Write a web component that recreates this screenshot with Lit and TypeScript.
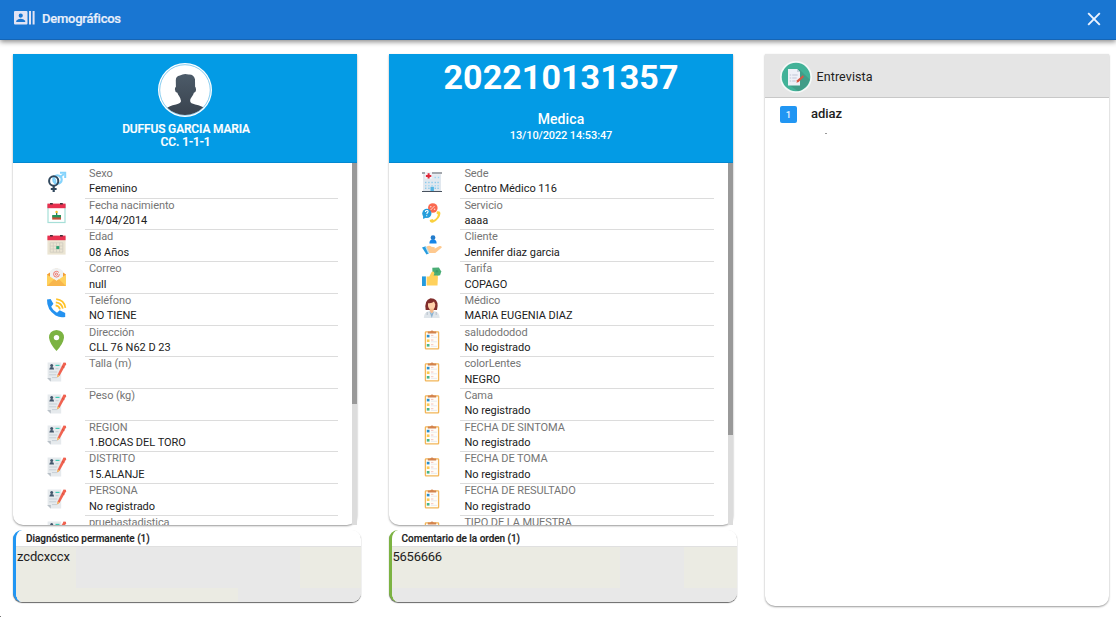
import { LitElement, html, css, svg } from "lit";
import { customElement, property } from "lit/decorators.js";
import { styleMap } from "lit/directives/style-map.js";

const dot = (x: number, y: number, c: string, w = 1.4) => svg`<rect x=${x} y=${y} width=${w} height=${w} fill=${c}/>`;

const icons: Record<string, unknown> = {
  gender: svg`<g fill="none"><circle cx="10.5" cy="7.5" r="4.2" stroke="#84d3fc" stroke-width="2.2"/><path d="M12.5 5.5 17 2" stroke="#84d3fc" stroke-width="2"/><path d="M13 .8h5.2V6" stroke="#84d3fc" stroke-width="2"/><ellipse cx="6.7" cy="9" rx="4.6" ry="4.8" stroke="#32495e" stroke-width="2"/><path d="M6.7 13.8V20M3.8 17h5.8" stroke="#32495e" stroke-width="2.2"/><path d="M6.5 5.6q3.4 2.8 1.2 6.4" stroke="#84d3fc" stroke-width="1.6"/></g>`,
  cake: svg`<rect x="1" y="2" width="17" height="17.5" fill="#fff" stroke="#a6dfd8" stroke-width="1.2"/><path d="M.4.6h18.2v4.6H.4z" fill="#e8304f"/><path d="M3 0h2.8v1.6H3zM13 0h2.8v1.6H13z" fill="#46303a"/><path d="M5.2 13.4h8.8v3.2H5.2z" fill="#c4503a"/><path d="M5.2 12h8.8v2.4H5.2z" fill="#24945a"/><path d="M9 9.6h1.3V12H9z" fill="#2f7d57"/><circle cx="9.6" cy="8.9" r="1.2" fill="#f5bf27"/>`,
  calendar: svg`<path d="M.4 2h18.2v17.6H.4z" fill="#ebe5d3"/><path d="M.4.6h18.2v4.6H.4z" fill="#e8304f"/><path d="M3 0h2.8v1.6H3zM13 0h2.8v1.6H13z" fill="#46303a"/><path d="M3.2 7.8h12.6v9.4H3.2zM3.2 11h12.6M3.2 14h12.6M6.3 7.8v9.4M9.5 7.8v9.4M12.6 7.8v9.4" fill="none" stroke="#cfcbc0" stroke-width=".8"/><path d="M9.3 11.1h3v3h-3z" fill="#28a071"/>`,
  mail: svg`<path d="M0 7.5 9.5 1 19 7.5V10H0z" fill="#f29d38"/><path d="M3 4q6.5-6 13 0v9H3z" fill="#f0f1f1"/><circle cx="9.5" cy="7.2" r="2.9" fill="none" stroke="#ed5b51" stroke-width=".8" stroke-dasharray="16 2"/><circle cx="9.5" cy="7.2" r="1.1" fill="none" stroke="#ed5b51" stroke-width=".8"/><path d="M0 7.5 9.5 14 19 7.5V19H0z" fill="#ffd15c"/><path d="m0 19 7-6.7 2.5 1.5 2.5-1.5L19 19z" fill="#f8b64c"/>`,
  phone: svg`<path d="M0 1.5 3.6 1l2.8 4.7-2.2 3q1.8 4 5.8 6l2.7-2.4 5.5 2.6v4q-5 1.3-9.6-1.4Q-.4 11.5 0 1.5Z" fill="#2492f0"/><g fill="none" stroke="#ffc226" stroke-width="1.7"><path d="M9.2 1.2q8 .8 9.2 8.7M8.8 4.3q6 .6 7 6.4M8.6 7.4q3.6.6 4.4 4"/></g>`,
  pin: svg`<path d="M9.5 0Q17 .6 17 7.8 16.2 14 9.5 21 2.8 14 2 7.8 2 .6 9.5 0Z" fill="#7cb342"/><circle cx="9.5" cy="7.6" r="2.7" fill="#fff"/>`,
  form: svg`<path d="M.6.5h13.6v19H3.2L.6 16.8z" fill="#e6eaed"/><path d="M.2 16h3.6v3.5z" fill="#b8c0c7"/><circle cx="4.7" cy="3.4" r="1.5" fill="#41566b"/><path d="M2.3 7.4q.1-2.3 2.4-2.3t2.4 2.3z" fill="#41566b"/><path d="M8.5 3.4h4" stroke="#3fc9b5" stroke-width="1.2"/><path d="M8.5 6.7h3M2.2 10h8M2.2 12.8h7M5 15.6h5" stroke="#c6cfd5" stroke-width="1"/><path d="m10.2 15.5.5-3L16.5.6l2.4.2.2 1.5-6.4 11.2z" fill="#f06250"/><path d="m10.2 15.5.5-3 2 1z" fill="#efc75e"/><path d="m14.8 4.2 2.6 1.4" stroke="#d44c3c" stroke-width=".8"/>`,
  hospital: svg`<path d="M0 1h20M0 19.5h20" stroke="#48515d" stroke-width="1.1"/><path d="M1 2.2h18V19H1z" fill="#e1e8ef"/><path d="M3 0h7v6.8H3z" fill="#f1f3f7"/><path d="M5.6 1.2h2v1.7h1.7v2H7.6v1.7h-2V4.9H3.9v-2h1.7z" fill="#e02a3b"/>${[4, 7.2, 10.4, 13.6, 16.4].map((x) => svg`${dot(x - 1, 9.8, "#8ccbec")}${dot(x - 1, 13, "#a3d8f3")}${dot(x - 1, 15.6, "#8ccbec")}`)}${dot(12.5, 4.8, "#9ad4f2")}${dot(15.8, 4.8, "#9ad4f2")}<path d="M8.5 14.8h3.4V19H8.5z" fill="#55b4e2"/>`,
  service: svg`<circle cx="10.8" cy="5" r="4.8" fill="#fa694f"/><path d="m8.6 7 4-4" stroke="#fff" stroke-width=".7"/><circle cx="8.8" cy="3.7" r=".8" fill="#ffd9d2"/><circle cx="12.6" cy="6.3" r=".8" fill="#ffd9d2"/><circle cx="4.8" cy="10.4" r="4.6" fill="#259ddb"/><path d="m1 13 .2 3 3-1.5z" fill="#259ddb"/><path d="M3.4 9q.2-1.8 1.8-1.5 1.8.6 0 2.4l-.4 1.2M4.7 12.2v1" fill="none" stroke="#fff" stroke-width="1.1"/><path d="M15.2 8.2q3.4-.4 3.2 2.4-.2 5.4-7.2 9-3.4.6-3.5-2.5l2.8-1 1.2.9q3.6-1.9 4.2-5.5l-1.5-1.3z" fill="#fad03e"/>`,
  client: svg`<circle cx="11" cy="2.7" r="2.4" fill="#247ccb"/><path d="M7.4 8.6q-.2-4.2 3.6-4.2t3.6 4.2z" fill="#1686e9"/><path d="M4 12.2q3.2-2.7 5.4-.4l3.2.4q.9 1.2-.5 1.9L17.5 11q2-.4 2.3 1.4L13.3 18H5z" fill="#fec98f"/><path d="m0 12.4 3.8-1.1 3.3 7-2.6 1.3z" fill="#259bde"/><path d="m3 11.6 1.3-.4 3.2 6.8-1.3.5z" fill="#bfe5f5"/>`,
  pay: svg`<path d="m10.3.7 6.6-.3 2.4 4-1.2 3.8-7.4 1.6z" fill="#4aad75"/><circle cx="14.8" cy="4.2" r="1.3" fill="#3b9c6a"/><path d="M4.6 9.4h2.7L9.6 5q2.6-1.2 2.8 1.4l-.8 2h3.3q1.4.5 1 2l-.4 8.2H4.6z" fill="#ffd15c"/><path d="M0 9.4h3.9V19H0z" fill="#259bde"/>`,
  doctor: svg`<path d="M3.7 12Q2 2 8.5.2 16 .4 15.6 8l-.6 4z" fill="#812d2b"/><path d="M6 5.2q4 .5 6-1.7l1.3 3q-.4 5-3.6 5.7Q6.6 11.5 6 8z" fill="#ffd0aa"/><path d="M7.7 10.6h4V15h-4z" fill="#f3ba8e"/><path d="M1.8 20q0-6 5.9-7L9.8 16l2.1-3q5.8 1 5.8 7z" fill="#dfe5ea"/><path d="M7.4 13.4 9.8 20l2.3-6.6-2.3 2.2z" fill="#8db4d2"/><path d="M5.2 14v3M14.2 14v3" stroke="#a9b6c2" stroke-width=".8"/>`,
  clipboard: svg`<rect x="3.4" y="1.9" width="13.2" height="17" rx=".6" fill="#fffdf8" stroke="#f2b558" stroke-width="1.3"/><path d="M5.8 3.4V1.6h2.4Q10-.6 11.8 1.6h2.4v1.8z" fill="#d3834e"/><path d="M4.8 4.8h2.7v2.6H4.8z" fill="#288fcc"/><path d="M4.8 9.4h2.7V12H4.8z" fill="#fbc950"/><path d="M4.8 14h2.7v2.6H4.8z" fill="#46b58a"/><path d="M9 5.4h2.4M9 10h2.4M9 14.7h2.4" stroke="#f5bdb6" stroke-width=".9"/><path d="M9 7.2h6M9 11.8h6M9 16.4h6" stroke="#e6e9ec" stroke-width=".9"/>`,
};

interface Row { icon: string; label: string; value: string }
const row = (icon: string, label: string, value: string): Row => ({ icon, label, value });

const patient: Row[] = [
  row("gender", "Sexo", "Femenino"),
  row("cake", "Fecha nacimiento", "14/04/2014"),
  row("calendar", "Edad", "08 Años"),
  row("mail", "Correo", "null"),
  row("phone", "Teléfono", "NO TIENE"),
  row("pin", "Dirección", "CLL 76 N62 D 23"),
  row("form", "Talla (m)", ""),
  row("form", "Peso (kg)", ""),
  row("form", "REGION", "1.BOCAS DEL TORO"),
  row("form", "DISTRITO", "15.ALANJE"),
  row("form", "PERSONA", "No registrado"),
  row("form", "pruebastadistica", ""),
];
const order: Row[] = [
  row("hospital", "Sede", "Centro Médico 116"),
  row("service", "Servicio", "aaaa"),
  row("client", "Cliente", "Jennifer diaz garcia"),
  row("pay", "Tarifa", "COPAGO"),
  row("doctor", "Médico", "MARIA EUGENIA DIAZ"),
  row("clipboard", "saludododod", "No registrado"),
  row("clipboard", "colorLentes", "NEGRO"),
  row("clipboard", "Cama", "No registrado"),
  row("clipboard", "FECHA DE SINTOMA", "No registrado"),
  row("clipboard", "FECHA DE TOMA", "No registrado"),
  row("clipboard", "FECHA DE RESULTADO", "No registrado"),
  row("clipboard", "TIPO DE LA MUESTRA", ""),
];

@customElement("detail-list")
class DetailList extends LitElement {
  @property({ attribute: false }) rows: Row[] = [];
  @property({ type: Number }) thumb = 240;
  static styles = css`
    :host { display: flex; height: 362px; overflow: hidden; }
    .rows { flex: 1; min-width: 0; padding: 3px 14px 0 34px; height: 359px; overflow: hidden; }
    :host(.order) .rows { padding-left: 33px; }
    :host(.order) .text { padding-left: 4.4px; }
    .row { display: flex; height: 31.73px; }
    .icon { width: 20px; height: 22px; margin-top: 5.6px; flex: none; overflow: visible; }
    .text { flex: 1; margin-left: 18px; padding-left: 4px; border-bottom: 1px solid #dcdcdc; box-sizing: border-box; height: 32.73px; }
    .label { height: 15.35px; line-height: 15px; font-size: 11px; white-space: nowrap; color: #757575; letter-spacing: -.08px; }
    .value { height: 15px; line-height: 15px; font-size: 11px; white-space: nowrap; color: #212121; letter-spacing: -.03px; }
    .track { width: 5px; background: #dcdcdc; height: 363px; }
    .thumb { background: #999; }
  `;
  render() {
    return html`<div class="rows">${this.rows.map((r) => html`<div class="row">
        <svg class="icon" viewBox="0 0 20 22">${icons[r.icon]}</svg>
        <div class="text"><div class="label">${r.label}</div><div class="value">${r.value}</div></div>
      </div>`)}</div>
      <div class="track"><div class="thumb" style=${styleMap({ height: `${this.thumb}px` })}></div></div>`;
  }
}

@customElement("app-root")
class AppRoot extends LitElement {
  static styles = css`
    :host { display: block; width: 1116px; height: 617px; background: #fff; overflow: hidden; font-family: Roboto, sans-serif; color: #212121; }
    .bar { height: 40px; box-sizing: border-box; border-bottom: 1px solid #1565b5; background: #1976d2; display: flex; align-items: center; padding: 0 14px; color: #e9effa; box-shadow: 0 2px 5px rgba(0, 0, 0, .45); }
    .contacts { width: 21px; height: 14px; margin: -4px 7px 0 0; }
    .title { font-size: 13px; font-weight: 500; line-height: 16px; margin-top: -2px; flex: 1; letter-spacing: -.24px; -webkit-text-stroke: .2px currentColor; }
    .close { width: 14px; height: 14px; margin: -1px 1px 0 0; }
    .columns { display: flex; gap: 27px; padding: 14px 0 0 13px; align-items: flex-start; }
    .column { width: 349px; display: flex; flex-direction: column; }
    .card { width: 344px; height: 471px; border-radius: 0 0 10px 10px; background: #fff; box-shadow: 0 1px 2px rgba(0, 0, 0, .4); }
    .head { height: 109px; box-sizing: border-box; background: #039be5; border-bottom: 1px solid #0288d1; color: #fff; display: flex; flex-direction: column; align-items: center; white-space: nowrap; }
    .avatar { width: 54px; height: 54px; margin: 9px 0 6px; }
    .name { font-size: 12px; font-weight: 500; line-height: 12.5px; margin-left: 2px; letter-spacing: -.15px; -webkit-text-stroke: .2px currentColor; }
    .name.id { margin-left: 1px; letter-spacing: -.05px; }
    .number { font-size: 34px; font-weight: 700; line-height: 40px; margin-top: 3px; letter-spacing: .08px; }
    .kind { font-size: 14px; font-weight: 500; line-height: 16px; margin-top: 14px; letter-spacing: .1px; }
    .date { font-size: 11px; font-weight: 500; line-height: 16px; letter-spacing: -.12px; padding-top: 1px; }
    .note { margin-top: 5px; width: 348px; height: 72px; box-sizing: border-box; border-left: 3px solid #2196f3; border-radius: 9px; background: #fff; box-shadow: 0 1px 1px rgba(0, 0, 0, .6); overflow: hidden; }
    .note.green { border-color: #7cb342; }
    .note-title { height: 17px; line-height: 18px; box-sizing: border-box; border-bottom: 1px solid #e0e0e0; font-size: 10px; font-weight: 500; padding-left: 10px; letter-spacing: -.04px; -webkit-text-stroke: .15px currentColor; }
    .note-text { height: 55px; box-sizing: border-box; font-size: 13px; line-height: 18px; padding: 1px 0 0 1px; letter-spacing: -.12px; background-color: #e8e8e8; background-repeat: no-repeat; background-image: linear-gradient(#ebebe3, #ebebe3), linear-gradient(#ebebe3, #ebebe3), linear-gradient(#ebebe3, #ebebe3); background-size: 60px 41px, 222px 15px, 62px 41px; background-position: 0 0, 0 41px, 284px 0; }
    .green .note-title, .green .note-text { text-indent: -.4px; }
    .green .note-text { background-size: 228px 41px, 0 0, 54px 41px; background-position: 0 0, 0 0, 292px 0; letter-spacing: -.3px; }
    .interview { width: 344px; height: 552px; border-radius: 0 0 10px 10px; box-shadow: 0 1px 2px rgba(0, 0, 0, .4); }
    .interview-head { height: 44px; box-sizing: border-box; background: #e5e5e5; border-bottom: 1px solid #c8c8c8; display: flex; align-items: center; padding: 1px 0 0 15px; font-size: 12.5px; letter-spacing: .1px; }
    .round { width: 32px; height: 32px; margin: 2px 4.5px 0 0; }
    .item { display: flex; align-items: center; height: 34px; padding-left: 15px; font-size: 13px; font-weight: 500; gap: 14px; }
    .item span { margin-top: -3px; letter-spacing: -.05px; }
    .badge { width: 17px; height: 17px; margin-top: -1px; border-radius: 2px; background: #2196f3; color: #e7f3ff; font-size: 9.5px; line-height: 17px; text-align: center; }
    .mark { width: 2px; height: 1px; background: #999; margin: 1px 0 0 60px; }
    .corner { width: 1px; height: 2px; background: #777; margin-top: 10px; }
  `;
  render() {
    return html`
      <header class="bar">
        <svg class="contacts" viewBox="0 0 21 14" fill="#e2e3f4"><path fill-rule="evenodd" d="M1 0h11.5q1 0 1 1v11.5q0 1-1 1H1q-1 0-1-1V1q0-1 1-1Zm5.7 2.5a2.1 2.1 0 1 0 .1 4.2 2.1 2.1 0 0 0-.1-4.2ZM2.2 11h9V9.8Q9.4 7.8 6.7 7.8T2.2 9.8Z"/><path d="M15 0h2v13.5h-2zM18.6 0h2v13.5h-2z"/></svg>
        <span class="title">Demográficos</span>
        <svg class="close" viewBox="0 0 14 14"><path d="m1.2 1.2 11.6 11.6m0-11.6L1.2 12.8" stroke="#eef4ff" stroke-width="1.9"/></svg>
      </header>
      <main class="columns">
        <section class="column">
          <div class="card">
            <div class="head">
              <svg class="avatar" viewBox="0 0 54 54"><defs><clipPath id="face"><circle cx="27" cy="27" r="25"/></clipPath><linearGradient id="shade" x2="0" y2="1"><stop stop-color="#4d5b69"/><stop offset="1" stop-color="#38424d"/></linearGradient></defs><circle cx="27" cy="27" r="27" fill="#fff"/><circle cx="27" cy="27" r="25.3" fill="#fff" stroke="#36a9e4" stroke-width=".6"/><path clip-path="url(#face)" fill="url(#shade)" d="M6 54 9 45q1.5-2 9-3.6 5-1.2 5-3.5-.1-2.4-2.1-5.1-1-1.2-1.5-3-2.5-.6-2.5-3.2 0-2.2 1-2.8l-.1-6.6q.1-4.2 4.1-4.7 4.2-2.5 8.7-1 5.2-.4 6.4 4.8l.1 7.5q1 .8.9 3.5-.2 2.3-2.1 2.5-.6 2-1.9 3.6-2 2.3-1.8 4.8.2 2.2 5 3.2 7.1 1.5 8.8 3.6l3 9z"/></svg>
              <div class="name">DUFFUS GARCIA MARIA</div><div class="name id">CC. 1-1-1</div>
            </div>
            <detail-list .rows=${patient} .thumb=${241}></detail-list>
          </div>
          <div class="note"><div class="note-title">Diagnóstico permanente (1)</div><div class="note-text">zcdcxccx</div></div>
        </section>
        <section class="column">
          <div class="card">
            <div class="head"><div class="number">202210131357</div><div class="kind">Medica</div><div class="date">13/10/2022 14:53:47</div></div>
            <detail-list class="order" .rows=${order} .thumb=${272}></detail-list>
          </div>
          <div class="note green"><div class="note-title">Comentario de la orden (1)</div><div class="note-text">5656666</div></div>
        </section>
        <section class="interview">
          <div class="interview-head">
            <svg class="round" viewBox="0 0 32 32"><circle cx="16" cy="16" r="16" fill="#f5f8f7"/><circle cx="16" cy="16" r="14.3" fill="#42b298"/><path d="m19 8 10.8 10.5Q27 27.8 18 30.2L8 23z" fill="#419d88"/><path d="M8 8h9l3 3v13.5H8z" fill="#eef1f7"/><path d="M17 8v3h3z" fill="#c7d1dc"/><path d="M9.7 14h8M9.7 17h7M9.7 20h6" stroke="#c0c5d6" stroke-width="1.2" stroke-dasharray="1.5 1 6 0"/><path d="m16.5 21.8.5-2.5 5.8-5 1.3 1.4-5.5 5.2z" fill="#d95543"/></svg>
            <span>Entrevista</span>
          </div>
          <div class="item"><div class="badge">1</div><span>adiaz</span></div>
          <div class="mark"></div>
        </section>
      </main>
      <div class="corner"></div>`;
  }
}
